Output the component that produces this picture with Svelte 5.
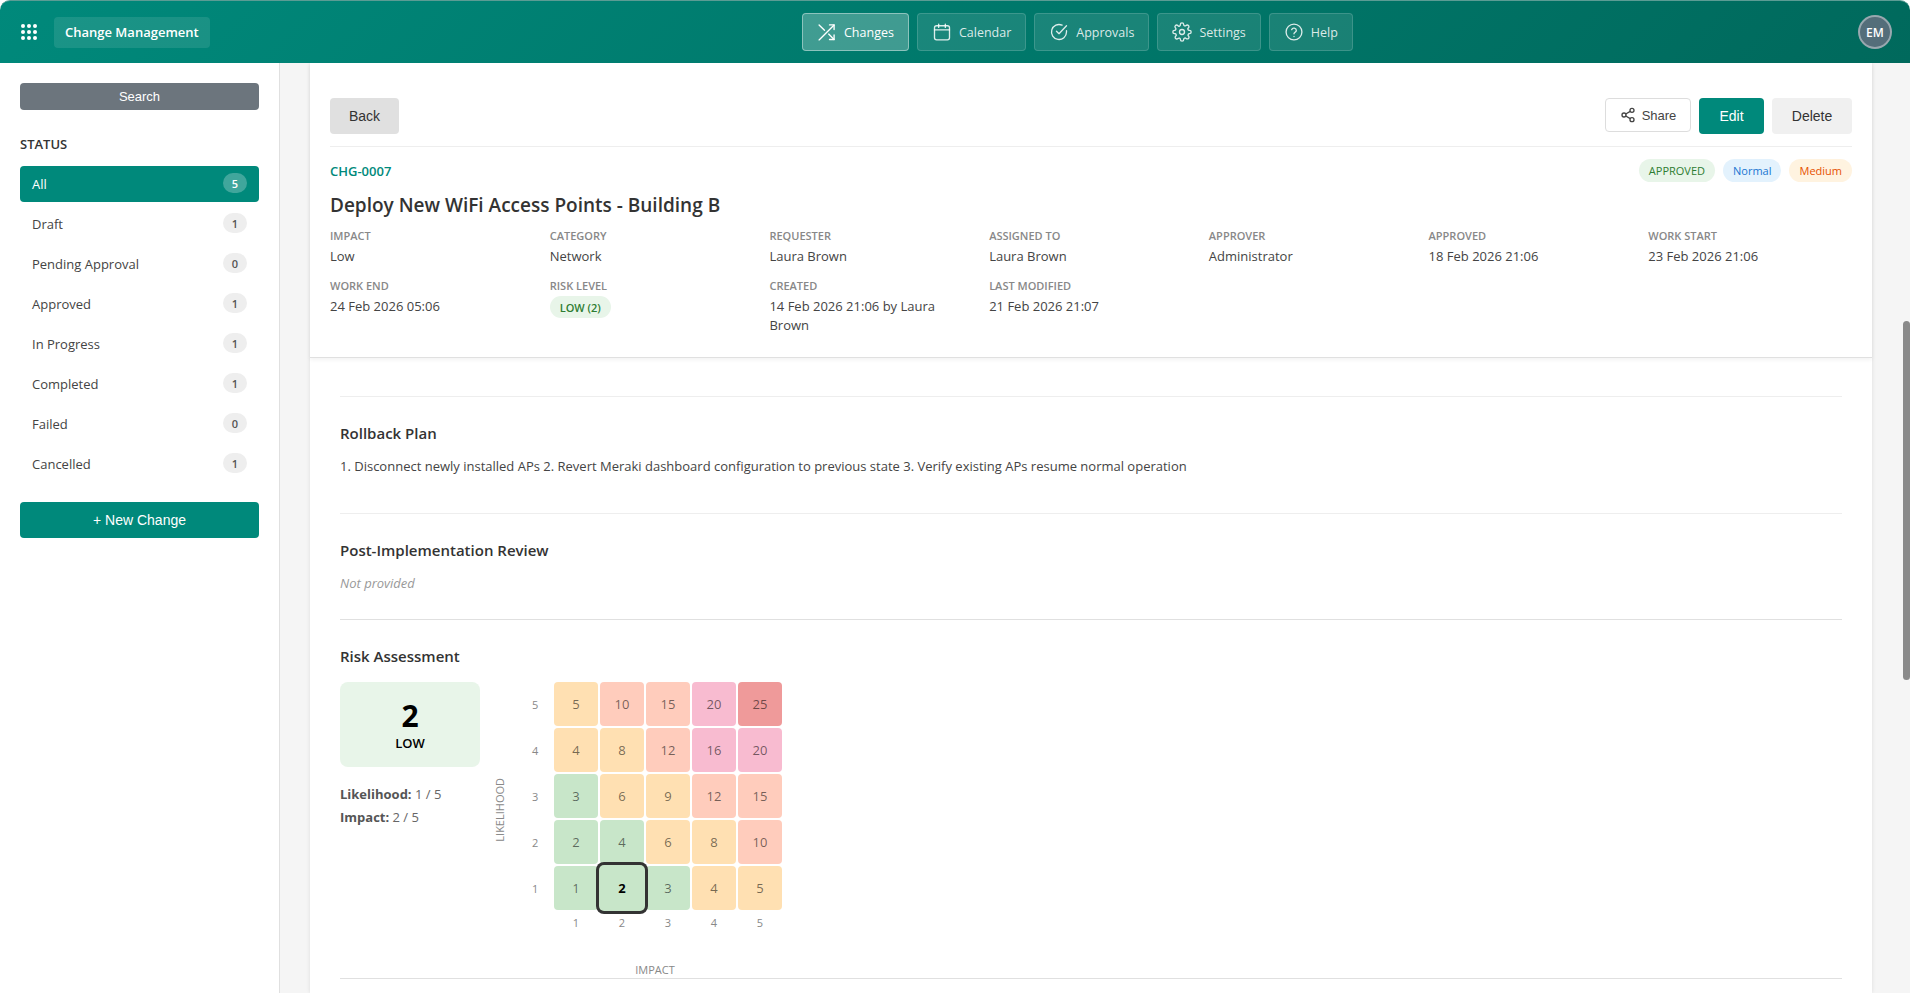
<script>
  const navItems = ['Changes', 'Calendar', 'Approvals', 'Settings', 'Help']

  const statuses = [
    { label: 'All', count: 5 },
    { label: 'Draft', count: 1 },
    { label: 'Pending Approval', count: 0 },
    { label: 'Approved', count: 1 },
    { label: 'In Progress', count: 1 },
    { label: 'Completed', count: 1 },
    { label: 'Failed', count: 0 },
    { label: 'Cancelled', count: 1 }
  ]

  const fields = [
    ['Impact', 'Low'],
    ['Category', 'Network'],
    ['Requester', 'Laura Brown'],
    ['Assigned To', 'Laura Brown'],
    ['Approver', 'Administrator'],
    ['Approved', '18 Feb 2026 21:06'],
    ['Work Start', '23 Feb 2026 21:06'],
    ['Work End', '24 Feb 2026 05:06'],
    ['Risk Level', null],
    ['Created', '14 Feb 2026 21:06 by Laura Brown'],
    ['Last Modified', '21 Feb 2026 21:07']
  ]

  const likelihoods = [5, 4, 3, 2, 1]
  const impacts = [1, 2, 3, 4, 5]

  function riskClass(score) {
    if (score <= 4 && score !== 4) return 'green'
    if (score === 4) return 'amber'
    if (score <= 9) return 'amber'
    if (score <= 15) return 'peach'
    if (score <= 20) return 'pink'
    return 'red'
  }

  // the grid is not purely score based: a few cells break the thresholds
  function cellClass(l, i) {
    const score = l * i
    if (l === 2 && i === 2) return 'green'
    if (l === 4 && i === 2) return 'amber'
    if (l === 2 && i === 4) return 'amber'
    return riskClass(score)
  }
</script>

<div class="app">
  <header class="topbar">
    <div class="brand">
      <span class="waffle" aria-hidden="true">
        {#each Array(9) as _}<i></i>{/each}
      </span>
      <span class="app-name">Change Management</span>
    </div>

    <nav class="nav">
      {#each navItems as item}
        <button class="nav-btn" class:active={item === 'Changes'}>
          <svg viewBox="0 0 24 24" width="20" height="20" fill="none" stroke="currentColor" stroke-width="1.6" stroke-linecap="round" stroke-linejoin="round">
            {#if item === 'Changes'}
              <path d="M15 3.5h5.5V9" />
              <path d="M2.5 21.5 20.5 3.5" />
              <path d="M20.5 15.5v5.5H15" />
              <path d="m14 14.5 6.5 6.5" />
              <path d="M2.5 3.5 9 10" />
            {:else if item === 'Calendar'}
              <rect x="3" y="4.5" width="18" height="17" rx="2.5" />
              <path d="M3 9.5h18M8 2.5v4M16 2.5v4" />
            {:else if item === 'Approvals'}
              <path d="M21 10.5V12a9 9 0 1 1-5.3-8.2" />
              <path d="m21 4.5-9 9.5-3-3" />
            {:else if item === 'Settings'}
              <circle cx="12" cy="12" r="3" />
              <path d="M19.4 15a1.65 1.65 0 0 0 .33 1.82l.06.06a2 2 0 1 1-2.83 2.83l-.06-.06a1.65 1.65 0 0 0-2.82 1.17V21a2 2 0 1 1-4 0v-.09a1.65 1.65 0 0 0-2.82-1.13l-.06.06a2 2 0 1 1-2.83-2.83l.06-.06A1.65 1.65 0 0 0 3.09 14H3a2 2 0 1 1 0-4h.09a1.65 1.65 0 0 0 1.13-2.82l-.06-.06a2 2 0 1 1 2.83-2.83l.06.06A1.65 1.65 0 0 0 10 3.09V3a2 2 0 1 1 4 0v.09a1.65 1.65 0 0 0 2.82 1.13l.06-.06a2 2 0 1 1 2.83 2.83l-.06.06A1.65 1.65 0 0 0 20.91 10H21a2 2 0 1 1 0 4h-.09a1.65 1.65 0 0 0-1.51 1z" />
            {:else}
              <circle cx="12" cy="12" r="9.5" />
              <path d="M9.2 9.2a2.9 2.9 0 0 1 5.6 1c0 1.9-2.8 2.4-2.8 4" />
              <path d="M12 17.4v.1" />
            {/if}
          </svg>
          {item}
        </button>
      {/each}
    </nav>

    <div class="avatar">EM</div>
  </header>

  <div class="body">
    <aside class="sidebar">
      <button class="search-btn">Search</button>
      <h3 class="status-title">STATUS</h3>
      <ul class="status-list">
        {#each statuses as s}
          <li class="status-row" class:active={s.label === 'All'}>
            <span>{s.label}</span>
            <span class="count">{s.count}</span>
          </li>
        {/each}
      </ul>
      <button class="new-btn">+ New Change</button>
    </aside>

    <main class="main">
      <div class="sheet">
        <section class="summary">
          <div class="actions">
            <button class="btn back">Back</button>
            <div class="actions-right">
              <button class="btn share">
                <svg viewBox="0 0 24 24" width="16" height="16" fill="none" stroke="currentColor" stroke-width="2">
                  <circle cx="18" cy="5" r="3" />
                  <circle cx="6" cy="12" r="3" />
                  <circle cx="18" cy="19" r="3" />
                  <path d="m8.6 13.5 6.8 4M15.4 6.5l-6.8 4" />
                </svg>
                Share
              </button>
              <button class="btn edit">Edit</button>
              <button class="btn delete">Delete</button>
            </div>
          </div>

          <div class="ref-row">
            <span class="ref">CHG-0007</span>
            <div class="pills">
              <span class="pill approved">APPROVED</span>
              <span class="pill normal">Normal</span>
              <span class="pill medium">Medium</span>
            </div>
          </div>

          <h1 class="title">Deploy New WiFi Access Points - Building B</h1>

          <div class="fields">
            {#each fields as [label, value]}
              <div class="field">
                <div class="field-label">{label}</div>
                {#if value}
                  <div class="field-value">{value}</div>
                {:else}
                  <span class="risk-pill">LOW (2)</span>
                {/if}
              </div>
            {/each}
          </div>
        </section>

        <section class="details">
          <div class="block rollback">
            <h2>Rollback Plan</h2>
            <p>1. Disconnect newly installed APs 2. Revert Meraki dashboard configuration to previous state 3. Verify existing APs resume normal operation</p>
          </div>

          <div class="block review">
            <h2>Post-Implementation Review</h2>
            <p class="empty">Not provided</p>
          </div>

          <div class="block risk">
            <h2>Risk Assessment</h2>
            <div class="risk-layout">
              <div class="risk-summary">
                <div class="score-box">
                  <div class="score">2</div>
                  <div class="score-label">LOW</div>
                </div>
                <div class="score-line"><strong>Likelihood:</strong> 1 / 5</div>
                <div class="score-line"><strong>Impact:</strong> 2 / 5</div>
              </div>

              <div class="matrix">
                <div class="y-title">LIKELIHOOD</div>
                <div class="matrix-inner">
                  <div class="grid">
                    {#each likelihoods as l}
                      <div class="axis-y">{l}</div>
                      {#each impacts as i}
                        <div class="cell {cellClass(l, i)}" class:current={l === 1 && i === 2}>{l * i}</div>
                      {/each}
                    {/each}
                    <div></div>
                    {#each impacts as i}
                      <div class="axis-x">{i}</div>
                    {/each}
                  </div>
                  <div class="x-title">IMPACT</div>
                </div>
              </div>
            </div>
          </div>
        </section>
      </div>

      <div class="scroll-thumb"></div>
    </main>
  </div>
</div>

<style>
  :global(body) {
    margin: 0;
    background: #fff;
    font-family: 'Open Sans', 'Noto Sans', sans-serif;
    color: #333;
  }

  .app {
    height: 993px;
    display: flex;
    flex-direction: column;
    overflow: hidden;
  }

  button {
    font-family: 'Liberation Sans', Arial, sans-serif;
    cursor: pointer;
  }

  /* top bar */

  .topbar {
    height: 63px;
    flex: none;
    box-sizing: border-box;
    position: relative;
    display: flex;
    align-items: center;
    justify-content: space-between;
    padding: 0 18px 0 21px;
    background: linear-gradient(135deg, #00897b, #00695c);
    border-radius: 10px 10px 0 0;
    border-top: 1px solid #5c9c94;
    color: #fff;
  }

  .brand {
    display: flex;
    align-items: center;
    gap: 17px;
  }

  .waffle {
    display: grid;
    grid-template-columns: repeat(3, 4px);
    gap: 2px 2px;
    width: 16px;
  }

  .waffle i {
    width: 4px;
    height: 4px;
    border-radius: 50%;
    background: #fff;
  }

  .app-name {
    height: 31px;
    display: flex;
    align-items: center;
    padding: 0 11px;
    border-radius: 4px;
    background: rgba(255, 255, 255, 0.1);
    font-size: 13px;
    font-weight: 600;
  }

  .nav {
    position: absolute;
    left: 802px;
    top: 12px;
    display: flex;
    gap: 8px;
  }

  .nav-btn {
    height: 38px;
    box-sizing: border-box;
    display: flex;
    align-items: center;
    gap: 7px;
    padding: 0 14px;
    border: 1px solid rgba(255, 255, 255, 0.15);
    border-radius: 4px;
    background: rgba(255, 255, 255, 0.1);
    color: rgba(255, 255, 255, 0.85);
    font-family: 'Open Sans', sans-serif;
    font-size: 12.5px;
  }

  .nav-btn.active {
    background: rgba(255, 255, 255, 0.25);
    border-color: rgba(255, 255, 255, 0.4);
    color: #fff;
  }

  .avatar {
    width: 34px;
    height: 34px;
    box-sizing: border-box;
    display: flex;
    align-items: center;
    justify-content: center;
    border-radius: 50%;
    border: 2px solid rgba(255, 255, 255, 0.4);
    background: #546e7a;
    font-size: 12px;
    font-weight: 600;
  }

  /* body */

  .body {
    flex: 1;
    display: flex;
    min-height: 0;
  }

  .sidebar {
    width: 280px;
    flex: none;
    box-sizing: border-box;
    padding: 20px 20px 0;
    border-right: 1px solid #e0e0e0;
    background: #fff;
  }

  .search-btn {
    width: 100%;
    height: 27px;
    display: block;
    border: none;
    border-radius: 4px;
    background: #6c757d;
    color: #fff;
    font-size: 13px;
  }

  .status-title {
    margin: 24px 0 12px;
    font-size: 13px;
    line-height: 20px;
    font-weight: 600;
    color: #333;
  }

  .status-list {
    list-style: none;
    margin: 0;
    padding: 0;
    display: flex;
    flex-direction: column;
    gap: 4px;
  }

  .status-row {
    height: 36px;
    display: flex;
    align-items: center;
    justify-content: space-between;
    padding: 0 12px;
    border-radius: 4px;
    font-size: 13px;
    color: #444;
  }

  .status-row.active {
    background: #00897b;
    color: #fff;
  }

  .count {
    width: 24px;
    height: 20px;
    margin-top: -2px;
    display: flex;
    align-items: center;
    justify-content: center;
    border-radius: 10px;
    background: #eee;
    font-size: 11px;
    font-weight: 600;
    color: #555;
  }

  .active .count {
    background: rgba(255, 255, 255, 0.25);
    color: #fff;
  }

  .new-btn {
    width: 100%;
    height: 36px;
    margin-top: 20px;
    display: block;
    border: none;
    border-radius: 4px;
    background: #00897b;
    color: #fff;
    font-size: 14px;
  }

  .main {
    flex: 1;
    min-width: 0;
    position: relative;
    padding: 0 38px 0 30px;
    background: #f5f5f5;
    overflow: hidden;
  }

  .sheet {
    height: 100%;
    background: #fff;
    box-shadow: 0 0 4px rgba(0, 0, 0, 0.1);
  }

  .scroll-thumb {
    position: absolute;
    left: 1623px;
    top: 258px;
    width: 7px;
    height: 359px;
    border-radius: 4px;
    background: #8a8a8a;
  }

  /* summary */

  .summary {
    height: 295px;
    box-sizing: border-box;
    padding: 35px 20px 0;
    border-bottom: 1px solid #e0e0e0;
    box-shadow: 0 2px 4px rgba(0, 0, 0, 0.05);
  }

  .actions {
    display: flex;
    justify-content: space-between;
    align-items: flex-start;
    height: 48px;
    box-sizing: content-box;
    border-bottom: 1px solid #eee;
  }

  .actions-right {
    display: flex;
    gap: 8px;
  }

  .btn {
    height: 36px;
    padding: 0 16px;
    border: none;
    border-radius: 4px;
    font-size: 14px;
  }

  .back {
    width: 69px;
    background: #e0e0e0;
    color: #333;
  }

  .share {
    width: 86px;
    height: 34px;
    display: flex;
    align-items: center;
    justify-content: center;
    gap: 6px;
    padding: 0;
    background: #fff;
    border: 1px solid #ddd;
    color: #444;
    font-size: 13px;
  }

  .edit {
    width: 65px;
    background: #00897b;
    color: #fff;
  }

  .delete {
    width: 80px;
    background: #f0f0f0;
    color: #333;
  }

  .ref-row {
    display: flex;
    justify-content: space-between;
    align-items: center;
    margin-top: 12px;
    height: 23px;
  }

  .ref {
    font-size: 13px;
    font-weight: 600;
    color: #00897b;
  }

  .pills {
    display: flex;
    gap: 8px;
  }

  .pill {
    height: 23px;
    display: flex;
    align-items: center;
    padding: 0 10px;
    border-radius: 12px;
    font-size: 11px;
    font-weight: 500;
  }

  .approved {
    background: #e8f5e9;
    color: #2e7d32;
  }

  .normal {
    background: #e3f2fd;
    color: #1976d2;
  }

  .medium {
    background: #fff3e0;
    color: #e65100;
  }

  .title {
    margin: 9px 0 0;
    font-size: 19px;
    line-height: 28px;
    font-weight: 600;
    color: #333;
  }

  .fields {
    display: grid;
    grid-template-columns: repeat(7, 1fr);
    gap: 12px 16px;
    margin-top: 9px;
  }

  .field-label {
    font-size: 11px;
    line-height: 16px;
    font-weight: 600;
    text-transform: uppercase;
    color: #888;
  }

  .field-value {
    margin-top: 3px;
    font-size: 13px;
    line-height: 19px;
    color: #444;
  }

  .risk-pill {
    display: inline-flex;
    align-items: center;
    height: 22px;
    margin-top: 2px;
    padding: 0 10px;
    border-radius: 11px;
    background: #e8f5e9;
    color: #2e7d32;
    font-size: 11px;
    font-weight: 600;
  }

  /* detail sections */

  .details {
    padding: 38px 30px 0;
  }

  .block {
    border-top: 1px solid #eee;
  }

  .block h2 {
    margin: 0;
    font-size: 15px;
    line-height: 22px;
    font-weight: 600;
    color: #333;
  }

  .block p {
    margin: 12px 0 0;
    font-size: 13px;
    line-height: 20px;
    color: #444;
  }

  .rollback {
    height: 117px;
    padding-top: 25px;
    box-sizing: border-box;
  }

  .review {
    height: 106px;
    padding-top: 25px;
    box-sizing: border-box;
  }

  .empty {
    font-style: italic;
    color: #999 !important;
  }

  .risk {
    height: 360px;
    box-sizing: border-box;
    padding-top: 25px;
    border-top-color: #e0e0e0;
    border-bottom: 1px solid #e0e0e0;
  }

  .risk-layout {
    display: flex;
    margin-top: 15px;
  }

  .risk-summary {
    width: 140px;
  }

  .score-box {
    height: 85px;
    display: flex;
    flex-direction: column;
    align-items: center;
    justify-content: center;
    border-radius: 8px;
    background: #e8f5e9;
    color: #000;
    margin-bottom: 16px;
  }

  .score {
    font-size: 30px;
    line-height: 36px;
    font-weight: 700;
  }

  .score-label {
    font-size: 13px;
    line-height: 18px;
    font-weight: 600;
  }

  .score-line {
    font-size: 13px;
    line-height: 23px;
    color: #666;
  }

  .score-line strong {
    font-weight: 700;
    color: #555;
  }

  .matrix {
    display: flex;
    align-items: center;
    margin-left: 12px;
  }

  .y-title {
    writing-mode: vertical-rl;
    transform: rotate(180deg);
    width: 16px;
    margin-top: -40px;
    font-size: 11px;
    font-weight: 500;
    color: #888;
    text-align: center;
  }

  .matrix-inner {
    margin-left: 20px;
  }

  .grid {
    display: grid;
    grid-template-columns: 24px repeat(5, 44px);
    grid-auto-rows: 44px;
    gap: 2px;
  }

  .grid > :nth-last-child(-n + 6) {
    height: 20px;
  }

  .axis-y {
    display: flex;
    align-items: center;
    justify-content: flex-start;
    padding-left: 4px;
    font-size: 11px;
    color: #888;
  }

  .axis-x {
    display: flex;
    align-items: center;
    justify-content: center;
    font-size: 11px;
    color: #888;
  }

  .cell {
    display: flex;
    align-items: center;
    justify-content: center;
    border-radius: 4px;
    font-size: 13px;
    color: rgba(0, 0, 0, 0.55);
  }

  .cell.green {
    background: #c8e6c9;
  }

  .cell.amber {
    background: #ffe0b2;
  }

  .cell.peach {
    background: #ffccbc;
  }

  .cell.pink {
    background: #f8bbd0;
  }

  .cell.red {
    background: #ef9a9a;
  }

  .cell.current {
    position: relative;
    z-index: 1;
    box-shadow: 0 0 0 1px #c8e6c9, 0 0 0 4px #333;
    color: #000;
    font-weight: 700;
  }

  .x-title {
    margin-top: 6px;
    padding-right: 0;
    text-align: center;
    font-size: 11px;
    font-weight: 500;
    color: #888;
  }
</style>
